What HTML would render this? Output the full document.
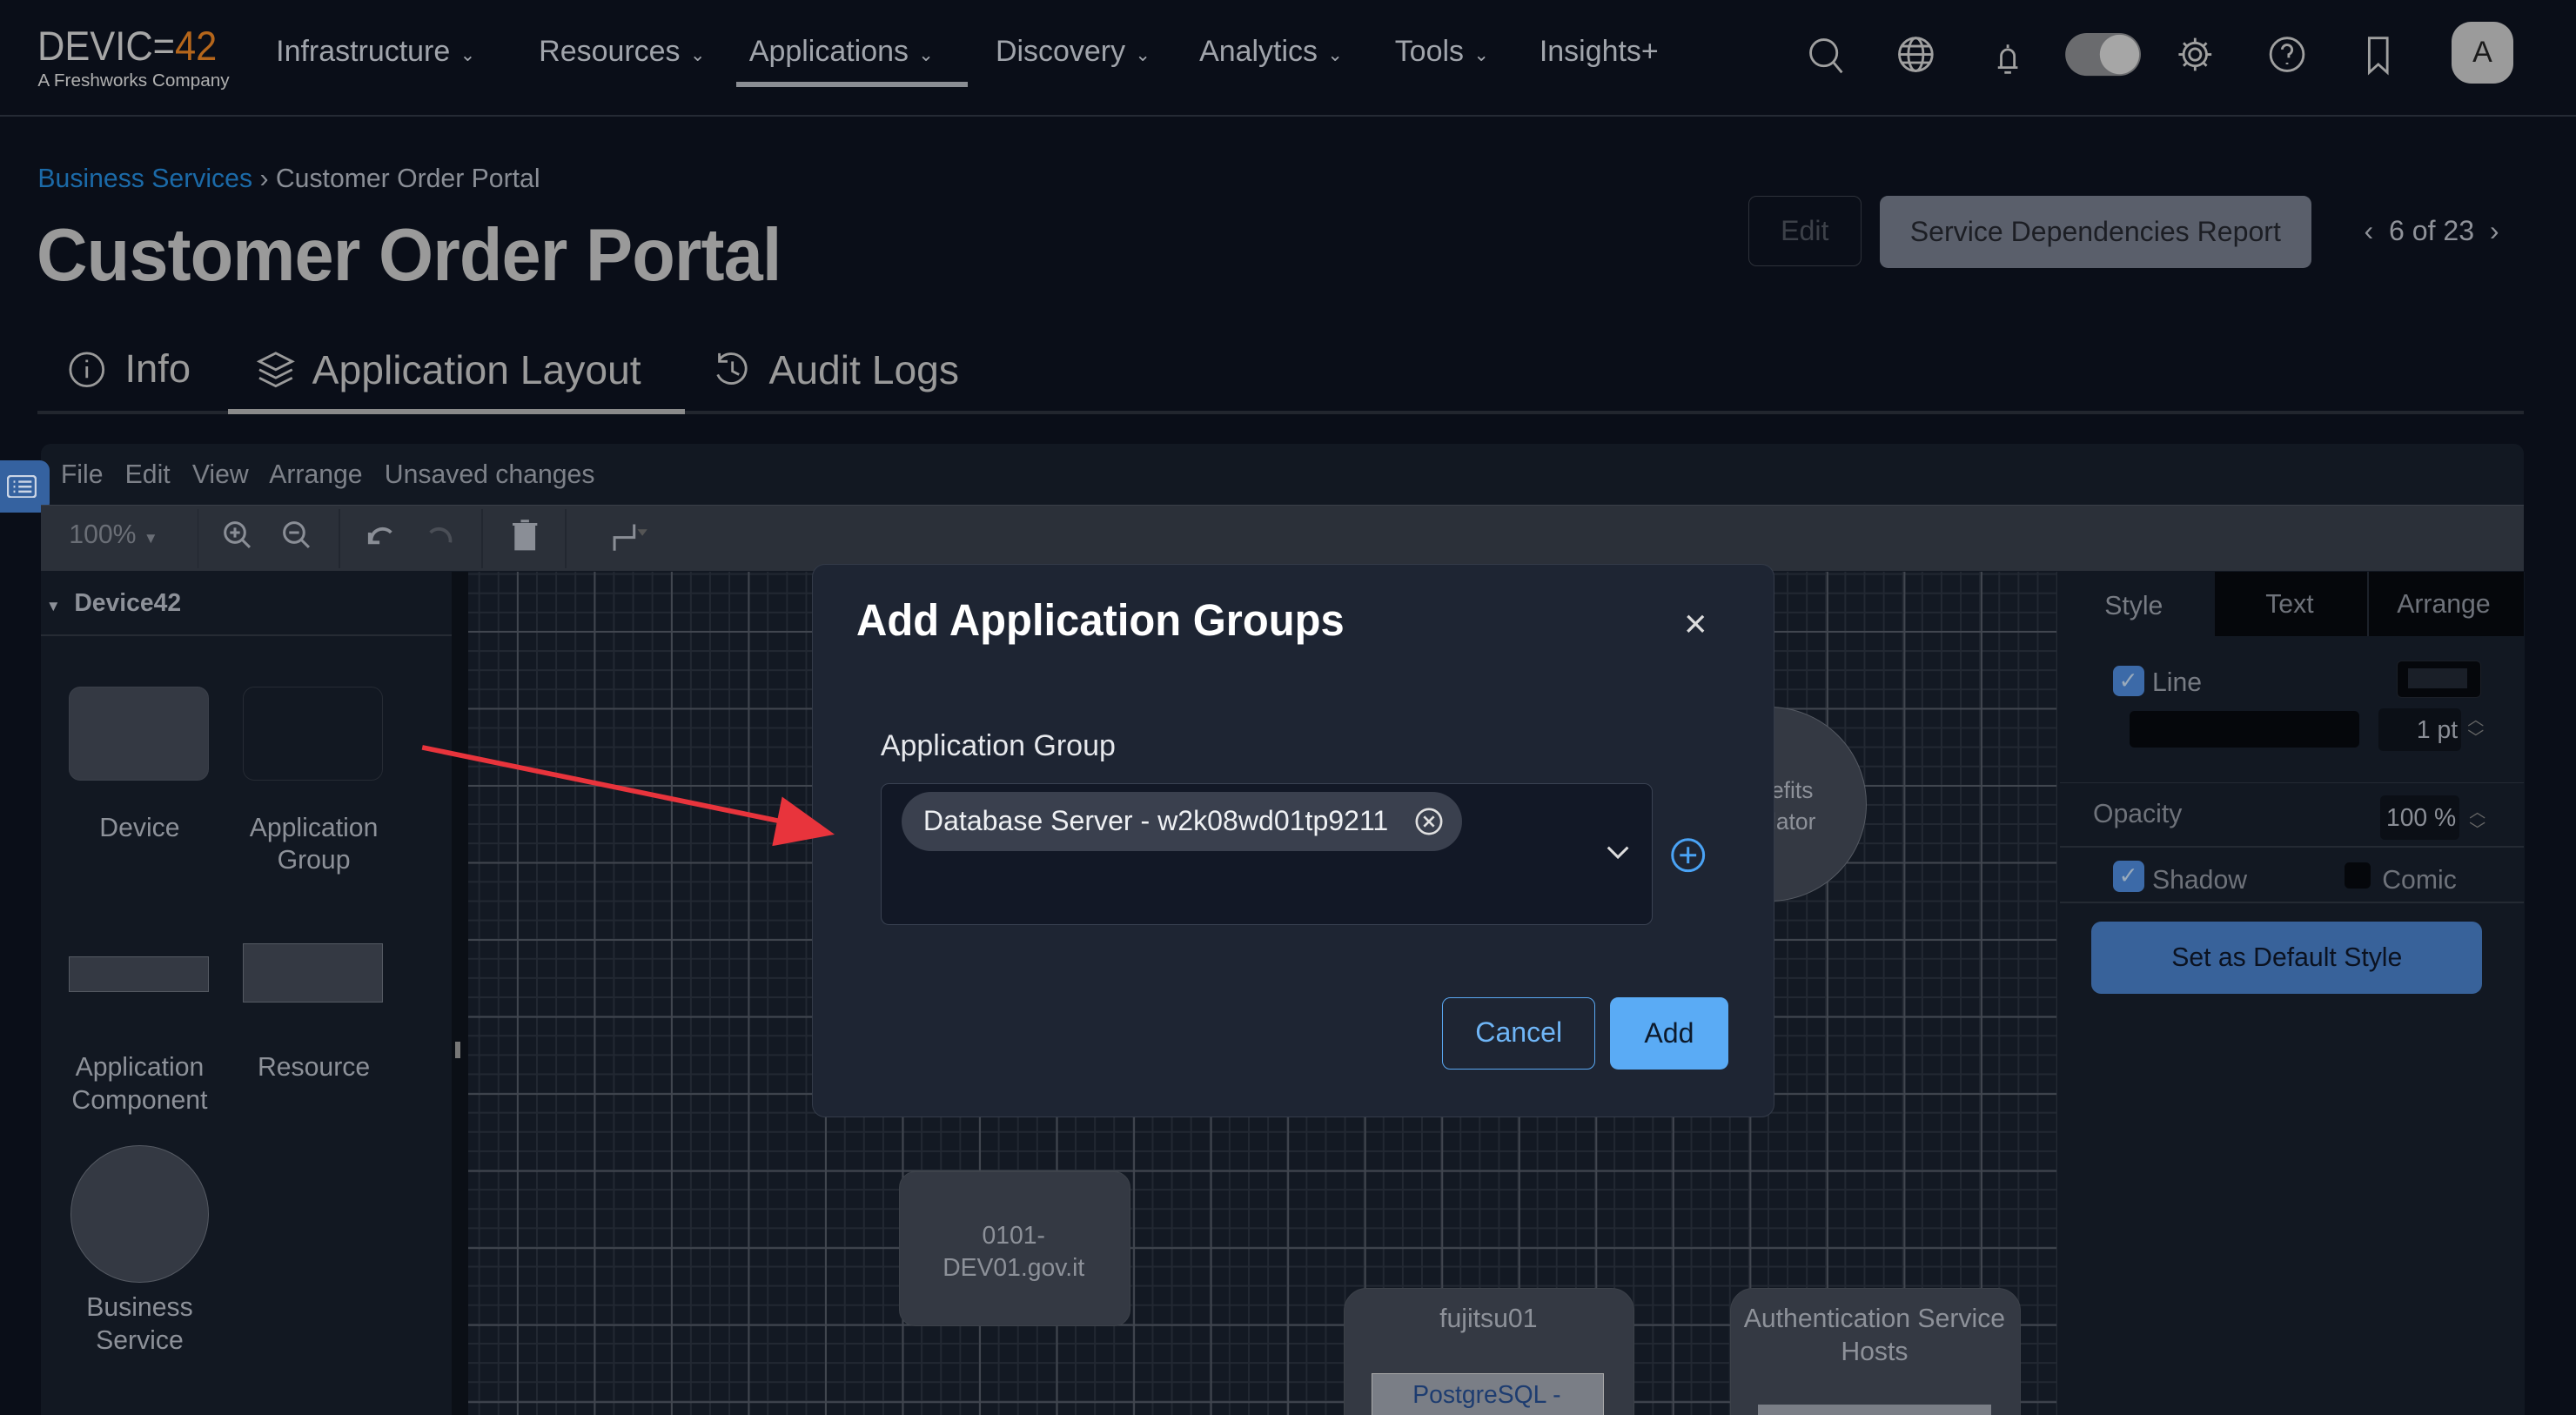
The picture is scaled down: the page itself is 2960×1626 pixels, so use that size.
<!DOCTYPE html>
<html><head><meta charset="utf-8"><style>
html,body{margin:0;padding:0;background:#0a0e18;overflow:hidden;width:2960px;height:1626px}
#w{position:relative;width:1568px;height:862px;zoom:1.88776;font-family:"Liberation Sans",sans-serif;color:#9a9ea6;background:#0a0e18;overflow:hidden}
.a{position:absolute}
.nav{font-size:18px;color:#a0a4ab;top:21px}
.nav .c{font-size:11px;margin-left:6px}
svg{position:absolute}
.grid{background-color:#131923;
background-image:linear-gradient(#41464f 1px,transparent 1px),linear-gradient(90deg,#41464f 1px,transparent 1px),linear-gradient(#222832 1px,transparent 1px),linear-gradient(90deg,#222832 1px,transparent 1px);
background-size:46.9px 46.9px,46.9px 46.9px,11.72px 11.72px,11.72px 11.72px;
background-position:29.6px 36px,29.6px 36px,29.6px 36px,29.6px 36px}
.lbl{font-size:16px;color:#8d9199;text-align:center;line-height:20px}
</style></head><body><div id="w">
<!-- header -->
<div class="a" style="left:23px;top:14px;font-size:25px;color:#a6a6a6;letter-spacing:0px;transform:scaleX(0.92);transform-origin:left">DEVIC<span>=</span><span style="color:#b5661b">42</span></div>
<div class="a" style="left:23px;top:43px;font-size:11px;color:#b0b0b0">A Freshworks Company</div>
<div class="a nav" style="left:168px">Infrastructure<span class="c">&#8964;</span></div>
<div class="a nav" style="left:328px">Resources<span class="c">&#8964;</span></div>
<div class="a nav" style="left:456px">Applications<span class="c">&#8964;</span></div>
<div class="a" style="left:448px;top:50px;width:141px;height:3px;background:#8a8d93"></div>
<div class="a nav" style="left:606px">Discovery<span class="c">&#8964;</span></div>
<div class="a nav" style="left:730px">Analytics<span class="c">&#8964;</span></div>
<div class="a nav" style="left:849px">Tools<span class="c">&#8964;</span></div>
<div class="a nav" style="left:937px">Insights+</div>
<svg style="left:1098px;top:20px" width="440" height="30" fill="none" stroke="#a0a0a0" stroke-width="1.5">
<circle cx="12" cy="12" r="8"/><path d="M18 18l5 6"/>
<g transform="translate(68,0)"><circle cx="0" cy="13" r="10"/><ellipse cx="0" cy="13" rx="4.5" ry="10"/><path d="M-10 13h20M-9 8h18M-9 18h18"/></g>
<path d="M118 21h12M120 21v-7a4 4 0 0 1 8 0v7M124 9v-2M122 24h4"/>
<rect x="159" y="0" width="46" height="26" rx="13" fill="#6a6b6e" stroke="none"/><circle cx="192" cy="13" r="12" fill="#a6a6a6" stroke="none"/>
<g transform="translate(238,13)"><circle r="3.5"/><path d="M0-10v3M0 7v3M-10 0h3M7 0h3M-7-7l2 2M5 5l2 2M-7 7l2-2M5-5l2-2"/><circle r="7"/></g>
<circle cx="294" cy="13" r="10"/><path d="M291 10a3 3 0 1 1 4 3v2M294 18v1"/>
<path d="M344 3h11v21l-5.5-5-5.5 5z"/>
</svg>
<div class="a" style="left:1492px;top:13px;width:38px;height:38px;border-radius:12px;background:#9b9b9b;color:#1a1a1a;font-size:18px;text-align:center;line-height:38px">A</div>
<div class="a" style="left:0;top:70px;width:1568px;height:1px;background:#252a34"></div>
<!-- title -->
<div class="a" style="left:23px;top:100px;font-size:16px;color:#1b6aa8">Business Services <span style="color:#8a8e96">› Customer Order Portal</span></div>
<div class="a" style="left:22px;top:129px;font-size:45px;font-weight:bold;color:#9a9a9a;letter-spacing:-0.5px;transform:scaleX(0.955);transform-origin:left">Customer Order Portal</div>
<div class="a" style="left:1064px;top:119px;width:68px;height:42px;border:1px solid #2e323a;border-radius:5px;color:#3c4048;font-size:17px;text-align:center;line-height:42px">Edit</div>
<div class="a" style="left:1144px;top:119px;width:263px;height:44px;border-radius:5px;background:#5a5f6b;color:#1c1e24;font-size:17px;text-align:center;line-height:44px">Service Dependencies Report</div>
<div class="a" style="left:1439px;top:131px;font-size:17px;color:#8f9299">‹&nbsp; 6 of 23 &nbsp;›</div>
<!-- tabs -->
<svg style="left:42px;top:214px" width="560" height="24" fill="none" stroke="#9a9a9a" stroke-width="1.5">
<circle cx="11" cy="11" r="10"/><path d="M11 9v7M11 5v1.5"/>
<path d="M116 6l10-5 10 5-10 5zM116 11l10 5 10-5M116 16l10 5 10-5"/>
<path d="M396 5a9 9 0 1 1-1 9M396 1v5h5M404 6v6l4 2"/>
</svg>
<div class="a" style="left:76px;top:211px;font-size:24px;color:#9a9a9a">Info</div>
<div class="a" style="left:190px;top:211px;font-size:24.5px;color:#9a9a9a">Application Layout</div>
<div class="a" style="left:468px;top:211px;font-size:24.5px;color:#9a9a9a">Audit Logs</div>
<div class="a" style="left:23px;top:250px;width:1513px;height:2px;background:#22262e"></div>
<div class="a" style="left:139px;top:249px;width:278px;height:3px;background:#8a8a8a"></div>
<!-- editor -->
<div class="a" style="left:25px;top:270px;width:1511px;height:600px;background:#121822;border-radius:6px 6px 0 0"></div>
<div class="a" style="left:0;top:280px;width:30px;height:32px;background:#3562a0;border-radius:0 6px 6px 0"></div>
<svg style="left:4px;top:289px" width="18" height="14" fill="none" stroke="#cbd5e5" stroke-width="1.3"><rect x="0.5" y="0.5" width="17" height="13" rx="2"/><path d="M4 4h1M7 4h8M4 7h1M7 7h8M4 10h1M7 10h8"/></svg>
<div class="a" style="left:37px;top:280px;font-size:16px;color:#7d8189">File &nbsp; Edit &nbsp; View &nbsp; Arrange &nbsp; Unsaved changes</div>
<div class="a" style="left:25px;top:307px;width:1511px;height:40px;background:#2b3039;border-top:1px solid #3a3f48"></div>
<div class="a" style="left:42px;top:317px;font-size:16px;color:#6a6e76">100% <span style="font-size:9px">▼</span></div>
<div class="a" style="left:120px;top:310px;width:1px;height:36px;background:#222730"></div>
<div class="a" style="left:206px;top:310px;width:1px;height:36px;background:#222730"></div>
<div class="a" style="left:293px;top:310px;width:1px;height:36px;background:#222730"></div>
<div class="a" style="left:344px;top:310px;width:1px;height:36px;background:#222730"></div>
<svg style="left:134px;top:315px" width="270" height="24" fill="none" stroke="#8a8e96" stroke-width="1.6">
<circle cx="9" cy="9" r="6"/><path d="M13 13l5 5M6 9h6M9 6v6"/>
<circle cx="45" cy="9" r="6"/><path d="M49 13l5 5M42 9h6"/>
<path d="M92 15a7 7 0 0 1 12-6M91 9v6h6" stroke-width="2"/>
<path d="M128 9a7 7 0 0 1 12 6" stroke="#4a4e56" stroke-width="2"/>
<rect x="180" y="5" width="11" height="14" fill="#8a8e96"/><path d="M178 4h15M183 2h5"/>
<path d="M240 20v-8h12v-8"/><path d="M254 7h6l-3 4z" fill="#555" stroke="none"/>
</svg>
<!-- left panel -->
<div class="a" style="left:25px;top:348px;width:250px;height:514px;background:#121822"></div>
<div class="a" style="left:275px;top:348px;width:10px;height:514px;background:#0b0f16"></div>
<div class="a" style="left:277px;top:634px;width:3px;height:10px;background:#777"></div>
<div class="a" style="left:28px;top:358px;font-size:15px;color:#8d9199;font-weight:bold"><span style="font-size:9px;font-weight:normal">▼</span> &nbsp;Device42</div>
<div class="a" style="left:25px;top:386px;width:250px;height:1px;background:#262b34"></div>
<div class="a" style="left:42px;top:418px;width:84px;height:56px;background:#343943;border:1px solid #3b404a;border-radius:7px"></div>
<div class="a" style="left:148px;top:418px;width:84px;height:56px;background:#121822;border:1px solid #262b34;border-radius:7px"></div>
<div class="a lbl" style="left:35px;top:494px;width:100px">Device</div>
<div class="a lbl" style="left:141px;top:494px;width:100px">Application<br>Group</div>
<div class="a" style="left:42px;top:582px;width:84px;height:21px;background:#343943;border:1px solid #555a63"></div>
<div class="a" style="left:148px;top:574px;width:84px;height:35px;background:#343943;border:1px solid #555a63"></div>
<div class="a lbl" style="left:35px;top:640px;width:100px">Application<br>Component</div>
<div class="a lbl" style="left:141px;top:640px;width:100px">Resource</div>
<div class="a" style="left:43px;top:697px;width:83px;height:83px;background:#343943;border:1px solid #555a63;border-radius:50%"></div>
<div class="a lbl" style="left:35px;top:786px;width:100px">Business<br>Service</div>
<!-- canvas -->
<div class="a grid" style="left:285px;top:348px;width:967px;height:514px"></div>
<div class="a" style="left:1040px;top:430px;width:95px;height:118px;background:#343943;border:1px solid #555a63;border-radius:0 60px 60px 0"></div>
<div class="a" style="left:1078px;top:472px;font-size:14px;color:#8d9199;line-height:19px">efits<br>lator</div>
<div class="a" style="left:547px;top:713px;width:140px;height:93px;background:#343943;border:1px solid #3c4149;border-radius:10px"></div>
<div class="a lbl" style="left:547px;top:742px;width:140px;font-size:15px">0101-<br>DEV01.gov.it</div>
<div class="a" style="left:818px;top:784px;width:176px;height:90px;background:#343943;border:1px solid #3c4149;border-radius:14px"></div>
<div class="a lbl" style="left:818px;top:793px;width:176px">fujitsu01</div>
<div class="a" style="left:835px;top:836px;width:140px;height:30px;background:#7a7e86;border:1px solid #aaa"></div>
<div class="a" style="left:835px;top:840px;width:140px;text-align:center;font-size:15px;color:#1d3c70">PostgreSQL -</div>
<div class="a" style="left:1053px;top:784px;width:176px;height:90px;background:#343943;border:1px solid #3c4149;border-radius:14px"></div>
<div class="a lbl" style="left:1053px;top:793px;width:176px">Authentication Service<br>Hosts</div>
<div class="a" style="left:1070px;top:855px;width:142px;height:10px;background:#7a7e86"></div>
<!-- right panel -->
<div class="a" style="left:1252px;top:348px;width:284px;height:514px;background:#121822;border-left:1px solid #242a33"></div>
<div class="a" style="left:1348px;top:348px;width:188px;height:39px;background:#05070b"></div>
<div class="a" style="left:1441px;top:348px;width:1px;height:39px;background:#1d222b"></div>
<div class="a" style="left:1281px;top:360px;font-size:16px;color:#777b83">Style</div>
<div class="a" style="left:1379px;top:359px;font-size:16px;color:#6e727a">Text</div>
<div class="a" style="left:1459px;top:359px;font-size:16px;color:#6e727a">Arrange</div>
<div class="a" style="left:1286px;top:405px;width:19px;height:19px;background:#3c6aa8;border-radius:4px;color:#9ab;font-size:14px;text-align:center;line-height:19px">✓</div>
<div class="a" style="left:1310px;top:407px;font-size:16px;color:#777b83">Line</div>
<div class="a" style="left:1459px;top:402px;width:50px;height:22px;background:#05070b;border-radius:3px;border:1px solid #1b1f27"></div>
<div class="a" style="left:1466px;top:407px;width:36px;height:12px;background:#1a1f28"></div>
<div class="a" style="left:1296px;top:433px;width:140px;height:22px;background:#05070b;border-radius:3px"></div>
<div class="a" style="left:1448px;top:431px;width:50px;height:26px;background:#0b0f16;border-radius:3px;font-size:15px;color:#8a8e96;text-align:right;line-height:26px;padding-right:2px;box-sizing:border-box">1 pt</div>
<div class="a" style="left:1502px;top:433px;font-size:10px;color:#666;line-height:11px">︿<br>﹀</div>
<div class="a" style="left:1254px;top:476px;width:282px;height:1px;background:#242a33"></div>
<div class="a" style="left:1274px;top:487px;font-size:16px;color:#6e727a">Opacity</div>
<div class="a" style="left:1449px;top:484px;width:48px;height:27px;background:#0b0f16;border-radius:3px;font-size:15px;color:#8a8e96;line-height:27px;text-align:right;padding-right:2px;box-sizing:border-box">100 %</div>
<div class="a" style="left:1503px;top:489px;font-size:10px;color:#666;line-height:11px">︿<br>﹀</div>
<div class="a" style="left:1254px;top:515px;width:282px;height:1px;background:#242a33"></div>
<div class="a" style="left:1286px;top:524px;width:19px;height:19px;background:#3c6aa8;border-radius:4px;color:#9ab;font-size:14px;text-align:center;line-height:19px">✓</div>
<div class="a" style="left:1310px;top:527px;font-size:16px;color:#6e727a">Shadow</div>
<div class="a" style="left:1427px;top:525px;width:16px;height:16px;background:#05070b;border-radius:3px"></div>
<div class="a" style="left:1450px;top:527px;font-size:16px;color:#6e727a">Comic</div>
<div class="a" style="left:1254px;top:549px;width:282px;height:1px;background:#242a33"></div>
<div class="a" style="left:1273px;top:561px;width:238px;height:44px;background:#38629a;border-radius:6px;color:#0b1220;font-size:16px;text-align:center;line-height:44px">Set as Default Style</div>
<!-- modal -->
<div class="a" style="left:494px;top:343px;width:586px;height:337px;background:#1e2533;border:1px solid #343b49;border-radius:8px;box-sizing:border-box"></div>
<!-- arrow -->
<svg style="left:250px;top:445px" width="265" height="75"><path d="M7 10L235 57" stroke="#e8343c" stroke-width="3"/><path d="M226 40L258 63 220 70z" fill="#e8343c"/></svg>
<div class="a" style="left:521px;top:362px;font-size:27px;font-weight:bold;color:#ffffff;transform:scaleX(0.96);transform-origin:left">Add Application Groups</div>
<div class="a" style="left:1025px;top:366px;font-size:24px;color:#ddd">×</div>
<div class="a" style="left:536px;top:444px;font-size:18px;color:#e6e8ec">Application Group</div>
<div class="a" style="left:536px;top:477px;width:470px;height:86px;background:#121826;border:1px solid #3a4252;border-radius:5px;box-sizing:border-box"></div>
<div class="a" style="left:549px;top:482px;width:341px;height:36px;background:#3a404e;border-radius:18px"></div>
<div class="a" style="left:562px;top:490px;font-size:17px;color:#eef0f3">Database Server - w2k08wd01tp9211</div>
<svg style="left:861px;top:491px" width="18" height="18" fill="none" stroke="#e0e0e0" stroke-width="1.4"><circle cx="9" cy="9" r="7.5"/><path d="M6 6l6 6M12 6l-6 6"/></svg>
<svg style="left:977px;top:513px" width="16" height="12" fill="none" stroke="#ddd" stroke-width="1.6"><path d="M2 3l6 6 6-6"/></svg>
<svg style="left:1016px;top:509px" width="23" height="23" fill="none" stroke="#4aa3f5" stroke-width="1.6"><circle cx="11.5" cy="11.5" r="9.5"/><path d="M11.5 6.5v10M6.5 11.5h10"/></svg>
<div class="a" style="left:878px;top:607px;width:93px;height:44px;border:1px solid #5aa8f2;border-radius:5px;box-sizing:border-box;color:#6fb5f6;font-size:17px;text-align:center;line-height:42px">Cancel</div>
<div class="a" style="left:980px;top:607px;width:72px;height:44px;background:#5aabf5;border-radius:5px;color:#0d1a2c;font-size:17px;text-align:center;line-height:44px">Add</div>
</div></body></html>
